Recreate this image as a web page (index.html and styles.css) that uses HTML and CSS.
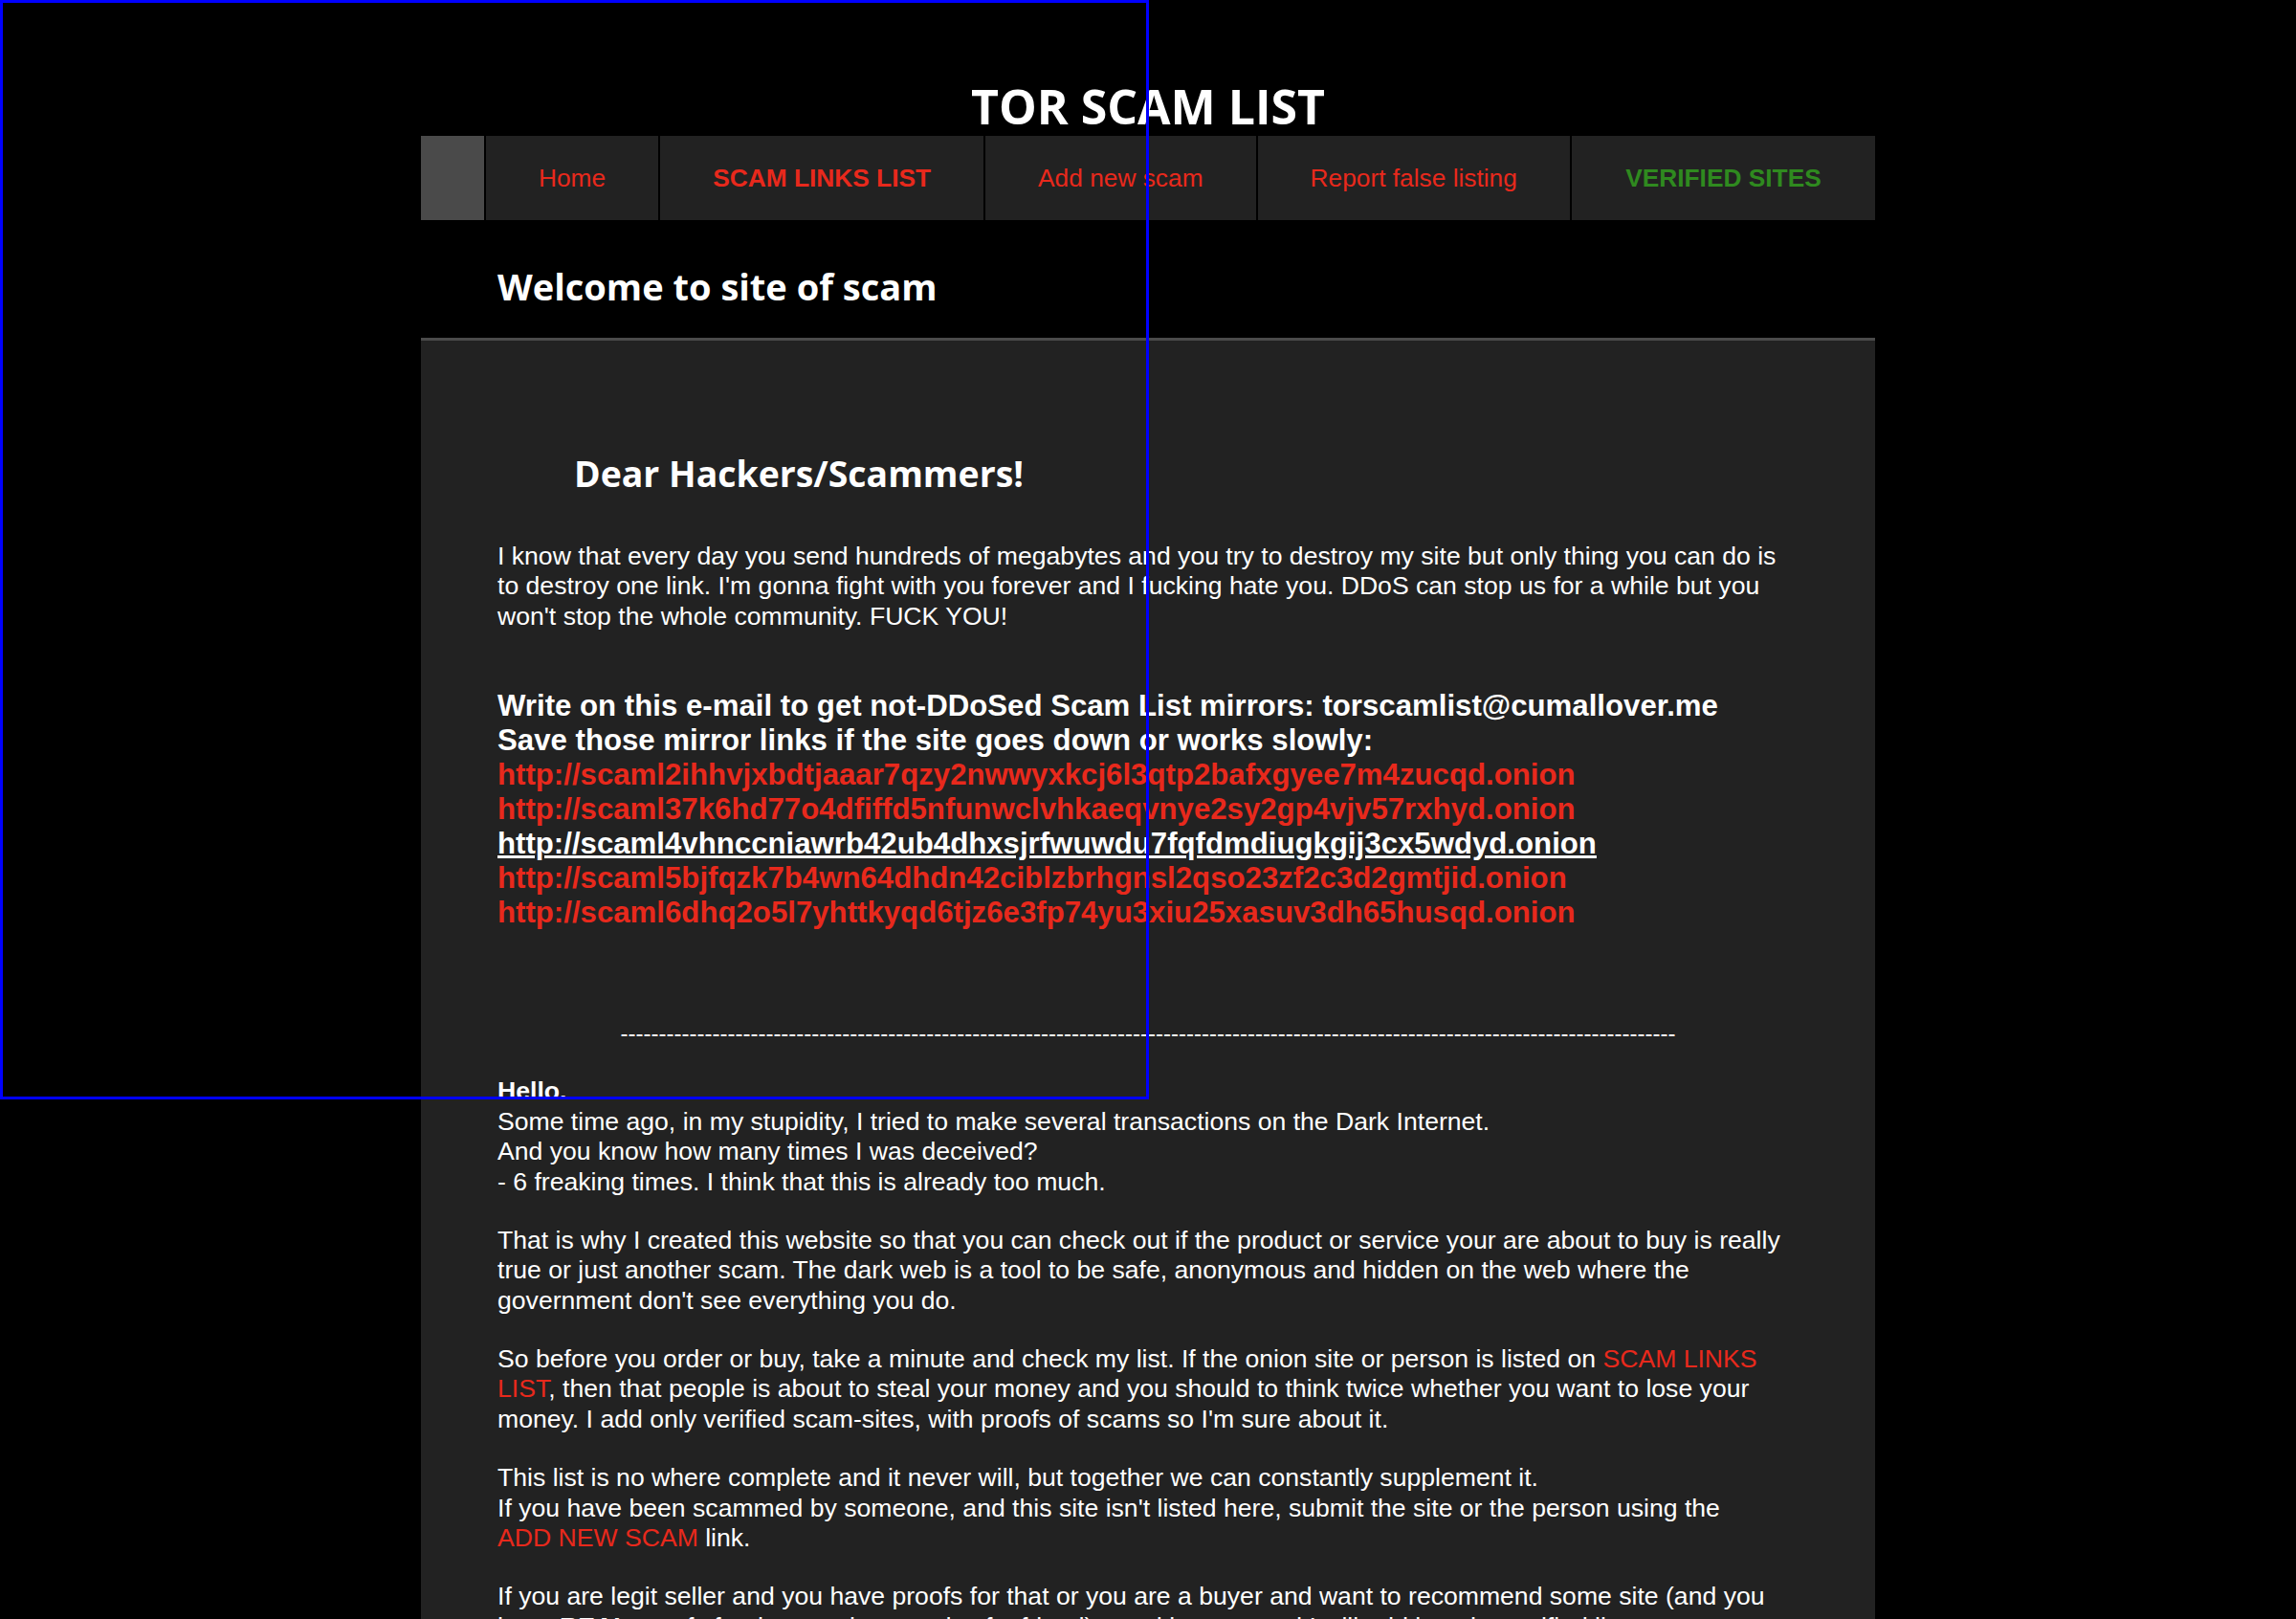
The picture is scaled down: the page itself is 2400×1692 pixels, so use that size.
FILE: index.html
```html
<!DOCTYPE html>
<html lang="en">
<head>
<meta charset="utf-8">
<title>TOR SCAM LIST</title>
<link rel="stylesheet" href="styles.css">
</head>
<body>
<div class="page">
  <header class="top">
    <h1 class="site-title">TOR SCAM LIST</h1>
    <nav class="nav">
      <span class="nav-logo"></span>
      <a class="nav-item" href="#">Home</a>
      <a class="nav-item strong" href="#">SCAM LINKS LIST</a>
      <a class="nav-item" href="#">Add new scam</a>
      <a class="nav-item" href="#">Report false listing</a>
      <a class="nav-item strong green last" href="#">VERIFIED SITES</a>
    </nav>
  </header>
  <div class="page-head">
    <h2 class="page-title">Welcome to site of scam</h2>
  </div>
  <main class="content">
    <h2 class="dear">Dear Hackers/Scammers!</h2>
    <p class="para first">I know that every day you send hundreds of megabytes and you try to destroy my site but only thing you can do is to destroy one link. I'm gonna fight with you forever and I fucking hate you. DDoS can stop us for a while but you won't stop the whole community. FUCK YOU!</p>
    <div class="mirrors">
      <div>Write on this e-mail to get not-DDoSed Scam List mirrors: torscamlist@cumallover.me</div>
      <div>Save those mirror links if the site goes down or works slowly:</div>
      <a class="red" href="#">http://scaml2ihhvjxbdtjaaar7qzy2nwwyxkcj6l3qtp2bafxgyee7m4zucqd.onion</a>
      <a class="red" href="#">http://scaml37k6hd77o4dfiffd5nfunwclvhkaeqvnye2sy2gp4vjv57rxhyd.onion</a>
      <a class="current" href="#">http://scaml4vhnccniawrb42ub4dhxsjrfwuwdu7fqfdmdiugkgij3cx5wdyd.onion</a>
      <a class="red" href="#">http://scaml5bjfqzk7b4wn64dhdn42ciblzbrhgnsl2qso23zf2c3d2gmtjid.onion</a>
      <a class="red" href="#">http://scaml6dhq2o5l7yhttkyqd6tjz6e3fp74yu3xiu25xasuv3dh65husqd.onion</a>
    </div>
    <p class="dashes">------------------------------------------------------------------------------------------------------------------------------------------</p>
    <p class="para"><b>Hello.</b><br>Some time ago, in my stupidity, I tried to make several transactions on the Dark Internet.<br>And you know how many times I was deceived?<br>- 6 freaking times. I think that this is already too much.</p>
    <p class="para">That is why I created this website so that you can check out if the product or service your are about to buy is really true or just another scam. The dark web is a tool to be safe, anonymous and hidden on the web where the government don't see everything you do.</p>
    <p class="para">So before you order or buy, take a minute and check my list. If the onion site or person is listed on <a class="red" href="#">SCAM LINKS LIST</a>, then that people is about to steal your money and you should to think twice whether you want to lose your money. I add only verified scam-sites, with proofs of scams so I'm sure about it.</p>
    <p class="para">This list is no where complete and it never will, but together we can constantly supplement it.<br>If you have been scammed by someone, and this site isn't listed here, submit the site or the person using the <a class="red nowrap" href="#">ADD NEW SCAM</a> link.</p>
    <p class="para">If you are legit seller and you have proofs for that or you are a buyer and want to recommend some site (and you have <b>REAL</b> proofs for that, not just words of a friend), send it to me and I will add it to the verified list.</p>
  </main>
</div>
<div class="frame-overlay"></div>
</body>
</html>
```

FILE: styles.css
```css
html, body {
  margin: 0;
  padding: 0;
  background: #000;
}

body {
  font-family: "Liberation Sans", Arial, sans-serif;
  color: #fff;
  overflow: hidden;
  height: 1692px;
}

.page {
  width: 1520px;
  margin: 0 auto;
}

.top {
  padding-top: 85px;
}

.site-title {
  margin: 0 0 5px;
  font-family: "Open Sans", "DejaVu Sans", sans-serif;
  font-weight: 700;
  font-size: 50px;
  line-height: 52px;
  text-align: center;
  color: #fff;
}

.nav {
  display: flex;
  gap: 2px;
  height: 88px;
}

.nav-logo {
  width: 66px;
  flex: none;
  background: #4a4a4a;
}

.nav-item {
  display: flex;
  align-items: center;
  justify-content: center;
  padding: 0 55px;
  background: #222;
  color: #e8291c;
  font-size: 26.3px;
  text-decoration: none;
  white-space: nowrap;
}

.nav-item.strong {
  font-weight: 700;
}

.nav-item.green {
  color: #2f8a1f;
}

.nav-item.last {
  flex: 1;
  padding: 0;
}

.page-head {
  box-sizing: border-box;
  height: 126px;
  padding: 50px 80px 0;
  border-bottom: 3px solid #4a4a4a;
}

.page-title,
.dear {
  margin: 0;
  font-family: "Open Sans", "DejaVu Sans", sans-serif;
  font-weight: 700;
  color: #fff;
}

.page-title {
  font-size: 38px;
  line-height: 38px;
}

.dear {
  font-size: 37.4px;
  line-height: 37.4px;
  padding-left: 80px;
}

.content {
  background: #222;
  padding: 119.5px 80px 80px;
  min-height: 1400px;
}

.para {
  margin: 0 0 29.4px;
  font-size: 26.6px;
  line-height: 31.6px;
}

.para.first {
  margin: 52.8px 0 0;
}

.mirrors {
  margin-top: 59.9px;
  display: flex;
  flex-direction: column;
  align-items: flex-start;
  font-size: 31.2px;
  font-weight: 700;
  line-height: 36px;
}

.red {
  color: #e8291c;
  text-decoration: none;
}

.nowrap {
  white-space: nowrap;
}

.current {
  color: #fff;
  text-decoration: underline;
}

.dashes {
  margin: 91.6px 0 29.4px;
  font-size: 24px;
  line-height: 31.6px;
  text-align: center;
  white-space: nowrap;
  overflow: hidden;
}

.frame-overlay {
  position: absolute;
  top: 0;
  left: 0;
  width: 1201px;
  height: 1149px;
  box-sizing: border-box;
  border: 3px solid #0000ff;
  pointer-events: none;
}
```
